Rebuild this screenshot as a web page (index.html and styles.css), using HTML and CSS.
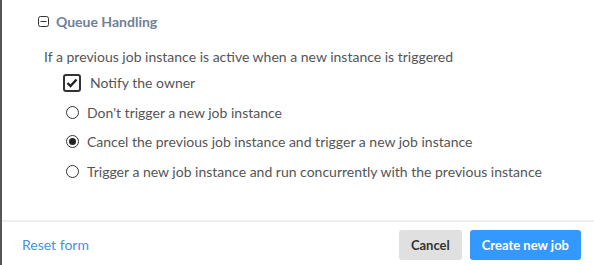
FILE: index.html
```html
<!DOCTYPE html>
<html lang="en">
<head>
    <meta charset="UTF-8">
    <title>Queue Handling</title>
    <link rel="stylesheet" href="styles.css">
</head>
<body>
    <div class="panel">
        <div class="panel-body">
            <div class="section-title">
                <svg class="toggle-icon" width="11" height="11" viewBox="0 0 11 11">
                    <rect x="0.5" y="0.5" width="10" height="10" rx="2" fill="none" stroke="#333" stroke-width="1"/>
                    <line x1="2.5" y1="5.5" x2="8.5" y2="5.5" stroke="#333" stroke-width="1"/>
                </svg>
                <span>Queue Handling</span>
            </div>
            <p class="hint">If a previous job instance is active when a new instance is triggered</p>
            <div class="options">
                <label class="option check">
                    <span class="checkbox">
                        <svg width="12" height="10" viewBox="0 0 12 10">
                            <path d="M1.5 5 L4.5 8 L10.5 1.5" fill="none" stroke="#222" stroke-width="2.4"/>
                        </svg>
                    </span>
                    Notify the owner
                </label>
                <label class="option radio">
                    <span class="radio-dot"></span>
                    Don't trigger a new job instance
                </label>
                <label class="option radio">
                    <span class="radio-dot selected"></span>
                    Cancel the previous job instance and trigger a new job instance
                </label>
                <label class="option radio">
                    <span class="radio-dot"></span>
                    Trigger a new job instance and run concurrently with the previous instance
                </label>
            </div>
        </div>
        <div class="panel-footer">
            <a class="reset-link" href="#">Reset form</a>
            <div class="actions">
                <button class="btn btn-cancel">Cancel</button>
                <button class="btn btn-primary">Create new job</button>
            </div>
        </div>
    </div>
</body>
</html>
```

FILE: styles.css
```css
body {
    margin: 0;
    font-family: Lato, "Open Sans", sans-serif;
    font-size: 14px;
    color: #555;
    background: #fff;
}

.panel {
    height: 265px;
    border-left: 2px solid #555;
    display: flex;
    flex-direction: column;
}

.panel-body {
    height: 222px;
    padding: 10px 0 0 36px;
    box-sizing: border-box;
    border-bottom: 2px solid #eee;
}

.section-title {
    display: flex;
    align-items: center;
    gap: 7px;
    height: 22px;
    color: #6e819b;
    font-weight: bold;
    font-size: 14px;
}

.hint {
    margin: 16px 0 0 6px;
    line-height: 18px;
}

.options {
    margin-left: 25px;
    margin-top: 2px;
}

.option {
    display: flex;
    align-items: center;
    height: 29.5px;
    gap: 8px;
}

.check {
    gap: 9px;
}

.checkbox {
    width: 14px;
    height: 14px;
    border: 2px solid #333;
    border-radius: 3px;
    display: flex;
    align-items: center;
    justify-content: center;
}

.radio-dot {
    width: 11px;
    height: 11px;
    margin-left: 3px;
    border: 1.5px solid #333;
    border-radius: 50%;
    display: flex;
    align-items: center;
    justify-content: center;
}

.radio-dot.selected::after {
    content: "";
    width: 7px;
    height: 7px;
    border-radius: 50%;
    background: #222;
}

.panel-footer {
    flex: 1;
    display: flex;
    align-items: center;
    justify-content: space-between;
    padding: 2px 13px 0 20px;
}

.reset-link {
    color: #4a90e2;
    text-decoration: none;
}

.actions {
    display: flex;
    gap: 8px;
}

.btn {
    font-family: inherit;
    font-size: 13px;
    font-weight: bold;
    height: 30px;
    border: none;
    border-radius: 3px;
    padding: 0 12px;
    cursor: pointer;
}

.btn-cancel {
    background: #e0e0e0;
    color: #333;
}

.btn-primary {
    background: #3399ff;
    color: #fff;
}
```
